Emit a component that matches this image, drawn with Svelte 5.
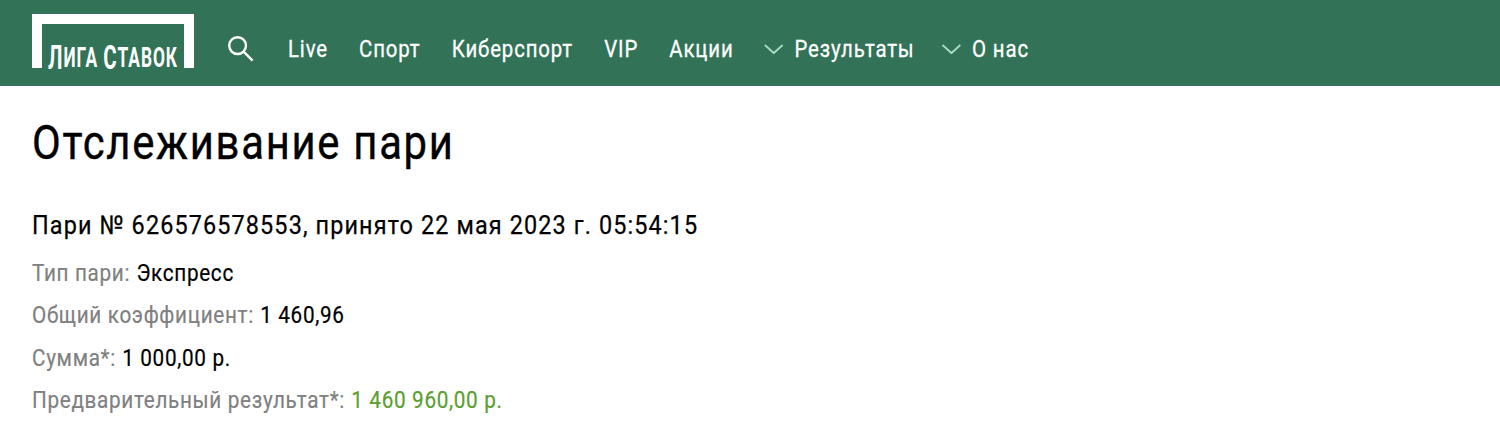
<script>
  const links = [
    { label: "Live" },
    { label: "Спорт" },
    { label: "Киберспорт" },
    { label: "VIP" },
    { label: "Акции" },
    { label: "Результаты", arrow: true },
    { label: "О нас", arrow: true }
  ];

  const rows = [
    { name: "Тип пари:", value: "Экспресс" },
    { name: "Общий коэффициент:", value: "1 460,96" },
    { name: "Сумма*:", value: "1 000,00 р." },
    { name: "Предварительный результат*:", value: "1 460 960,00 р.", win: true }
  ];
</script>

<header class="header">
  <a class="logo" href="#top">
    <span class="logo-text"><span class="logo-big">Л</span>ига <span class="logo-big">С</span>тавок</span>
  </a>
  <svg class="search" width="26" height="26" viewBox="0 0 26 26" fill="none" stroke="#fff" stroke-width="2.4">
    <circle cx="9.6" cy="9.6" r="8.4" />
    <path d="M15.6 15.6l9 9" />
  </svg>
  <nav class="nav">
    {#each links as link}
      <a class="link" href="#top">
        {#if link.arrow}
          <svg class="arrow" width="23" height="10" viewBox="0 0 23 10" fill="none" stroke="#a9dcc6" stroke-width="2.2">
            <path d="M1 1l10.5 8L22 1" />
          </svg>
        {/if}
        {link.label}
      </a>
    {/each}
  </nav>
</header>

<main class="content">
  <h1 class="title">Отслеживание пари</h1>
  <h2 class="subtitle">Пари № 626576578553, принято 22 мая 2023 г. 05:54:15</h2>
  {#each rows as row}
    <div class="row">
      <span class="name">{row.name}</span>
      <span class="value" class:win={row.win}>{row.value}</span>
    </div>
  {/each}
</main>

<style>
  :global(body) {
    background: #fff;
    font-family: Roboto, "Liberation Sans", sans-serif;
  }

  .header {
    display: flex;
    align-items: center;
    height: 86px;
    padding-left: 32px;
    background: #327257;
  }

  .logo {
    position: relative;
    flex: none;
    box-sizing: border-box;
    width: 162px;
    height: 54px;
    margin-top: -4px;
    border: 10px solid #fff;
    border-bottom: 0;
    text-decoration: none;
  }

  .logo-text {
    position: absolute;
    left: 0;
    right: 0;
    bottom: -5px;
    display: flex;
    justify-content: center;
    color: #fff;
    font-size: 28px;
    font-weight: 700;
    letter-spacing: 1.5px;
    line-height: 30px;
    text-transform: uppercase;
    white-space: pre;
    transform: scaleX(0.62);
  }

  .logo-big {
    font-size: 33px;
  }

  .search {
    flex: none;
    margin-left: 34px;
    margin-top: 12px;
  }

  .nav {
    display: flex;
    gap: 36.7px;
    margin-left: 34px;
    padding-top: 12px;
    transform: scaleX(0.85);
    transform-origin: left;
  }

  .link {
    display: flex;
    align-items: center;
    gap: 13px;
    color: #fff;
    font-size: 24px;
    letter-spacing: 1px;
    line-height: 28px;
    text-decoration: none;
    white-space: nowrap;
    -webkit-text-stroke: 0.3px #fff;
  }

  .arrow {
    margin-left: -1px;
  }

  .link:last-child .arrow {
    margin-left: -5px;
  }

  .content {
    padding: 32px 32px 0;
  }

  .title {
    margin: 0;
    color: #000;
    font-size: 48px;
    font-weight: 400;
    letter-spacing: 2px;
    line-height: 50px;
    white-space: nowrap;
    transform: scaleX(0.87);
    transform-origin: left;
    -webkit-text-stroke: 0.4px #000;
  }

  .subtitle {
    margin: 42px 0 20px;
    color: #000;
    font-size: 26px;
    font-weight: 400;
    letter-spacing: 1.25px;
    line-height: 30px;
    white-space: nowrap;
    transform: scaleX(0.9);
    transform-origin: left;
    -webkit-text-stroke: 0.25px #000;
  }

  .row {
    display: flex;
    gap: 7px;
    height: 42.3px;
    font-size: 23px;
    letter-spacing: 0.75px;
    line-height: 28px;
    white-space: nowrap;
    transform: scaleX(0.9);
    transform-origin: left;
    -webkit-text-stroke: 0.2px;
  }

  .name {
    color: #808080;
  }

  .value {
    color: #000;
  }

  .value.win {
    color: #5a9e2f;
  }
</style>
